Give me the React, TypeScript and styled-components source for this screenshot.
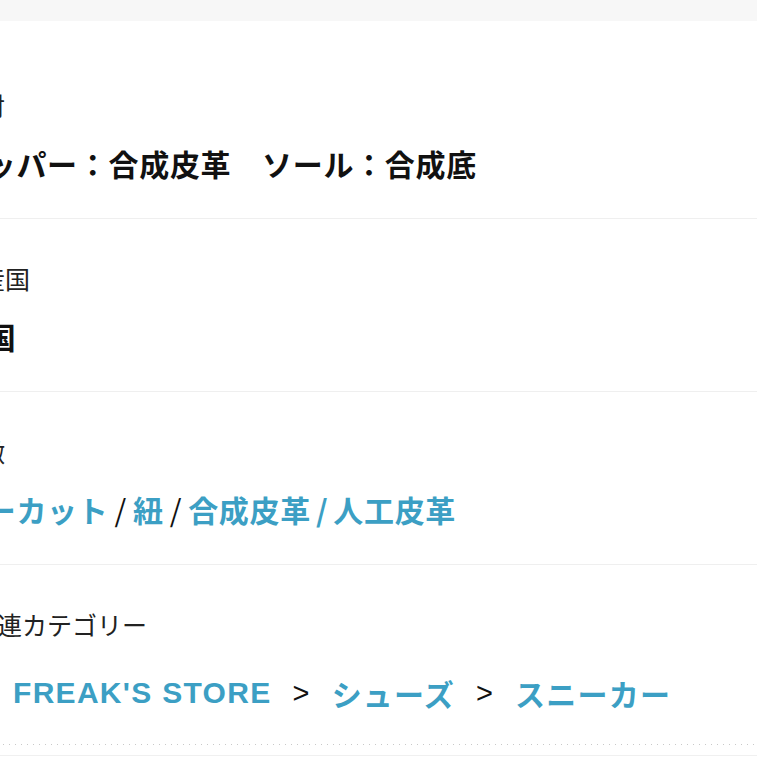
import { Fragment } from 'react';
import styled, { createGlobalStyle } from 'styled-components';

const GlobalStyle = createGlobalStyle`
  html, body {
    margin: 0;
    padding: 0;
    background: #ffffff;
  }
  body {
    font-family: "Noto Sans CJK JP", "Noto Sans", sans-serif;
    color: #111111;
  }
`;

const Page = styled.div`
  width: 757px;
  height: 757px;
  overflow: hidden;
  background: #ffffff;
`;

const TopBand = styled.div`
  height: 21px;
  background: #f7f7f7;
`;

const Spec = styled.dl`
  margin: 0 0 0 -45px;
  padding: 25px 0 0;
`;

const Row = styled.div<{ $dotted?: boolean; $indent?: number }>`
  padding: 44px 0 35px ${(p) => p.$indent ?? 0}px;
  border-bottom: 1px solid #efefef;

  ${(p) =>
    p.$dotted &&
    `
    padding-bottom: 32px;
    border-bottom: none;
    background: linear-gradient(to right, #c9c9c9 1px, transparent 1px) left bottom / 6px 1px repeat-x;
  `}
`;

const Label = styled.dt`
  font-size: 25px;
  line-height: 30px;
  color: #222222;
  white-space: nowrap;
`;

const Value = styled.dd`
  margin: 23px 0 0;
  font-size: 30px;
  line-height: 40px;
  font-weight: 700;
  letter-spacing: 0.7px;
  color: #111111;
  white-space: nowrap;
`;

const Link = styled.a<{ $latin?: boolean }>`
  color: #3c9fc4;
  font-weight: 600;
  text-decoration: none;
  ${(p) => p.$latin && `font-family: "Liberation Sans", "Noto Sans CJK JP", sans-serif; font-weight: 700; letter-spacing: 1.3px;`}
`;

const Sep = styled.span`
  color: #111111;
  font-weight: 400;
  margin: 0 6px;
`;

const Slash = styled.span`
  margin: 0 5px;
`;

const Crumbs = styled.dd`
  margin: 34px 0 0 41px;
  display: flex;
  align-items: center;
  gap: 21px;
  font-size: 30px;
  line-height: 40px;
  letter-spacing: 1.2px;
  white-space: nowrap;
`;

const Arrow = styled.span`
  color: #111111;
  font-family: "Liberation Sans", sans-serif;
  font-size: 29px;
  font-weight: 400;
`;

const BottomLine = styled.div`
  height: 10px;
  border-bottom: 1px solid #f0f0f0;
`;

const tags = [['ローカット'], ['紐'], ['合成皮革', '人工皮革']];
const crumbs = ["FREAK'S STORE", 'シューズ', 'スニーカー'];

export default function App() {
  return (
    <Page>
      <GlobalStyle />
      <TopBand />
      <Spec>
        <Row>
          <Label>素材</Label>
          <Value>アッパー：合成皮革　ソール：合成底</Value>
        </Row>
        <Row>
          <Label>生産国</Label>
          <Value>中国</Value>
        </Row>
        <Row>
          <Label>特徴</Label>
          <Value>
            {tags.map((t, i) => (
              <Fragment key={t.join('/')}>
                {i > 0 && <Sep>/</Sep>}
                <Link href="#">
                  {t.map((part, j) => (
                    <Fragment key={part}>
                      {j > 0 && <Slash>/</Slash>}
                      {part}
                    </Fragment>
                  ))}
                </Link>
              </Fragment>
            ))}
          </Value>
        </Row>
        <Row $dotted $indent={17}>
          <Label>関連カテゴリー</Label>
          <Crumbs>
            {crumbs.map((c, i) => (
              <Fragment key={c}>
                {i > 0 && <Arrow>&gt;</Arrow>}
                <Link href="#" $latin={i === 0}>
                  {c}
                </Link>
              </Fragment>
            ))}
          </Crumbs>
        </Row>
      </Spec>
      <BottomLine />
    </Page>
  );
}
